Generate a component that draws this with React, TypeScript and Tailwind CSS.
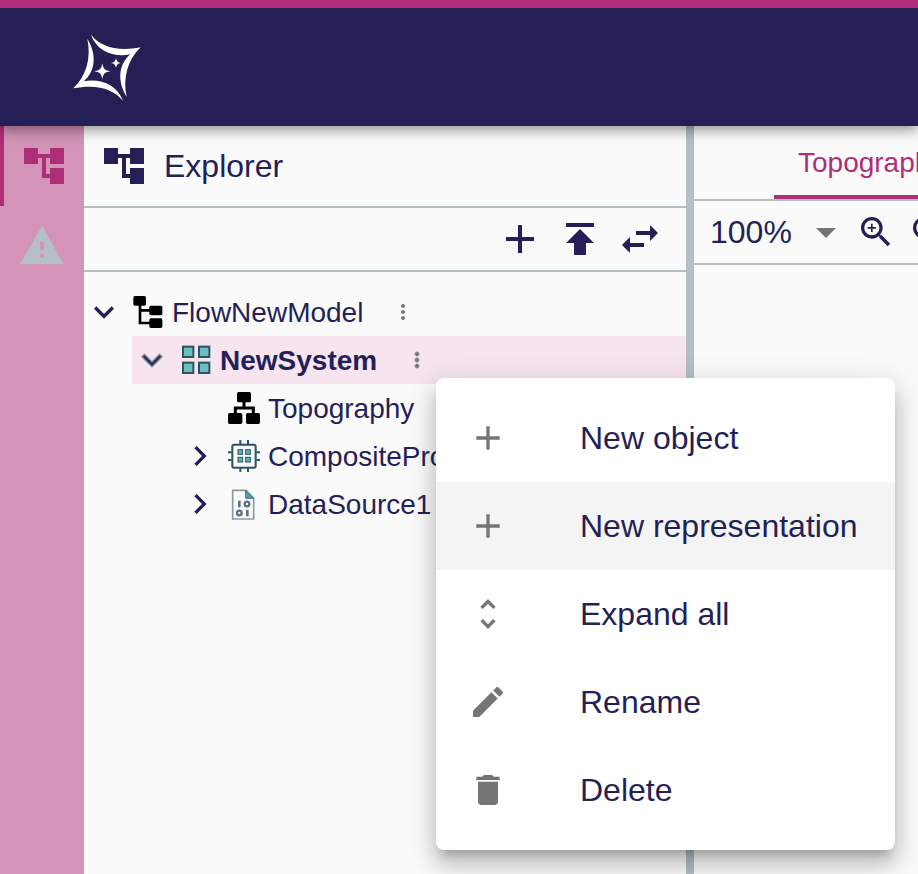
import React from 'react';

const paths = {
  tree: 'M22 11V3h-7v3H9V3H2v8h7V8h2v10h4v3h7v-8h-7v3h-2V8h2v3z',
  warning: 'M1 21h22L12 2 1 21zm12-3h-2v-2h2v2zm0-4h-2v-4h2v4z',
  add: 'M19 13h-6v6h-2v-6H5v-2h6V5h2v6h6v2z',
  publish: 'M5 4v2h14V4H5zm0 10h4v6h6v-6h4l-7-7-7 7z',
  swap: 'M6.99 11L3 15l3.99 4v-3H14v-2H6.99v-3zM21 9l-3.99-4v3H10v2h7.01v3L21 9z',
  down: 'M16.59 8.59L12 13.17 7.41 8.59 6 10l6 6 6-6z',
  right: 'M10 6L8.59 7.41 13.17 12l-4.58 4.59L10 18l6-6z',
  more: 'M12 8c1.1 0 2-.9 2-2s-.9-2-2-2-2 .9-2 2 .9 2 2 2zm0 2c-1.1 0-2 .9-2 2s.9 2 2 2 2-.9 2-2-.9-2-2-2zm0 6c-1.1 0-2 .9-2 2s.9 2 2 2 2-.9 2-2-.9-2-2-2z',
  dropDown: 'M7 10l5 5 5-5z',
  zoomIn:
    'M15.5 14h-.79l-.28-.27C15.41 12.59 16 11.11 16 9.5 16 5.91 13.09 3 9.5 3S3 5.91 3 9.5 5.91 16 9.5 16c1.61 0 3.09-.59 4.23-1.57l.27.28v.79l5 4.99L20.49 19l-4.99-5zm-6 0C7.01 14 5 11.99 5 9.5S7.01 5 9.5 5 14 7.01 14 9.5 11.99 14 9.5 14zM12 10h-2v2H9v-2H7V9h2V7h1v2h2v1z',
  zoomOut:
    'M15.5 14h-.79l-.28-.27C15.41 12.59 16 11.11 16 9.5 16 5.91 13.09 3 9.5 3S3 5.91 3 9.5 5.91 16 9.5 16c1.61 0 3.09-.59 4.23-1.57l.27.28v.79l5 4.99L20.49 19l-4.99-5zm-6 0C7.01 14 5 11.99 5 9.5S7.01 5 9.5 5 14 7.01 14 9.5 11.99 14 9.5 14zM7 9h5v1H7z',
  unfold:
    'M12 5.83L15.17 9l1.41-1.41L12 3 7.41 7.59 8.83 9 12 5.83zm0 12.34L8.83 15l-1.41 1.41L12 21l4.59-4.59L15.17 15 12 18.17z',
  edit: 'M3 17.25V21h3.75L17.81 9.94l-3.75-3.75L3 17.25zM20.71 7.04c.39-.39.39-1.02 0-1.41l-2.34-2.34c-.39-.39-1.02-.39-1.41 0l-1.83 1.83 3.75 3.75 1.83-1.83z',
  trash: 'M6 19c0 1.1.9 2 2 2h8c1.1 0 2-.9 2-2V7H6v12zM19 4h-3.5l-1-1h-5l-1 1H5v2h14V4z',
};

function Icon({ name, className, halo }: { name: keyof typeof paths; className: string; halo?: boolean }) {
  return (
    <svg viewBox="0 0 24 24" className={className} fill="currentColor" aria-hidden="true">
      <path d={paths[name]} />
      {halo && <path d={paths[name]} fill="none" stroke="#7b8e96" strokeWidth="0.9" />}
    </svg>
  );
}

function Logo() {
  const blade =
    'M93 41 C122 78 172 92 242 79 C202 118 188 170 200 228 C172 182 174 132 211 100 C165 110 110 92 93 41Z';
  return (
    <svg viewBox="39 36 204 204" className="size-[68px]" fill="white" aria-label="Home">
      <path d={blade} />
      <path d={blade} transform="rotate(180 141 140.5)" />
      <path d="M127 127 C130 144 134 148 151 151 C134 154 130 158 127 175 C124 158 120 154 103 151 C120 148 124 144 127 127Z" />
      <path d="M168 111 C170 121 173 124 183 126 C173 128 170 131 168 141 C166 131 163 128 153 126 C163 124 166 121 168 111Z" />
    </svg>
  );
}

function ModelIcon() {
  return (
    <svg viewBox="0 0 96 96" className="size-8 shrink-0" aria-hidden="true">
      <rect x="4" y="0" width="38" height="29" rx="5" />
      <rect x="52" y="29" width="39" height="29" rx="5" />
      <rect x="52" y="67" width="39" height="29" rx="5" />
      <path d="M24 26V81H54M24 43H54" fill="none" stroke="black" strokeWidth="8" />
    </svg>
  );
}

function SystemIcon() {
  return (
    <svg viewBox="0 0 96 96" className="size-8 shrink-0" fill="#6bbfc1" stroke="#2c5361" strokeWidth="6" aria-hidden="true">
      <rect x="9" y="8" width="31" height="31" />
      <rect x="57" y="8" width="31" height="31" />
      <rect x="9" y="56" width="31" height="31" />
      <rect x="57" y="56" width="31" height="31" />
    </svg>
  );
}

function TopographyIcon() {
  return (
    <svg viewBox="0 0 96 96" className="size-8 shrink-0" aria-hidden="true">
      <rect x="27" y="0" width="42" height="31" rx="5" />
      <rect x="0" y="63" width="43" height="33" rx="5" />
      <rect x="54" y="63" width="42" height="33" rx="5" />
      <path d="M48 28V48M22 66V48H76V66" fill="none" stroke="black" strokeWidth="9" />
    </svg>
  );
}

function ProcessorIcon() {
  return (
    <svg viewBox="0 0 96 96" className="size-8 shrink-0" fill="none" stroke="#2c5361" strokeWidth="6" aria-hidden="true">
      <rect x="13" y="14" width="70" height="69" rx="5" fill="#fafafa" />
      <path d="M37 0V12M60 0V12M37 85V96M60 85V96M0 37H11M0 60H11M85 37H96M85 60H96" />
      <g fill="#5fb0b6" strokeWidth="3">
        <rect x="30" y="29" width="14" height="14" />
        <rect x="53" y="29" width="14" height="14" />
        <rect x="30" y="52" width="14" height="14" />
        <rect x="53" y="52" width="14" height="14" />
      </g>
    </svg>
  );
}

function SourceIcon() {
  return (
    <svg viewBox="0 0 96 96" className="size-8 shrink-0" fill="none" aria-hidden="true">
      <path d="M14 7H54L77 31V93H14Z" stroke="#8a9aa1" strokeWidth="5" fill="#fafafa" />
      <path d="M53 7L77 31H53Z" fill="#4a9fb0" stroke="#4d7480" strokeWidth="3" />
      <path d="M34 38V58M58 65V85" stroke="#5f727c" strokeWidth="8" />
      <circle cx="57" cy="48" r="7" stroke="#5f727c" strokeWidth="7" />
      <circle cx="34" cy="75" r="7" stroke="#5f727c" strokeWidth="7" />
    </svg>
  );
}

type RowProps = {
  label: string;
  icon: React.ReactNode;
  arrow?: 'down' | 'right';
  more?: boolean;
  selected?: boolean;
};

function Row({ label, icon, arrow, more, selected }: RowProps) {
  return (
    <div className={selected ? 'flex h-12 items-center bg-[#f6e5ef] font-bold' : 'flex h-12 items-center'}>
      <div className="mr-2 size-10 shrink-0">
        {arrow && (
          <button type="button" aria-label={'Toggle ' + label} className="block">
            <Icon name={arrow} className="size-10" halo={selected} />
          </button>
        )}
      </div>
      {icon}
      <span className="ml-2 whitespace-nowrap pt-0.5 text-[28px] leading-10">{label}</span>
      {more && (
        <button type="button" aria-label={'More actions for ' + label} className="ml-7 text-[#757575]">
          <Icon name="more" className="size-6" halo={selected} />
        </button>
      )}
    </div>
  );
}

const menuItems: { label: string; icon: keyof typeof paths; active?: boolean }[] = [
  { label: 'New object', icon: 'add' },
  { label: 'New representation', icon: 'add', active: true },
  { label: 'Expand all', icon: 'unfold' },
  { label: 'Rename', icon: 'edit' },
  { label: 'Delete', icon: 'trash' },
];

function ContextMenu() {
  return (
    <div
      role="menu"
      className="absolute left-[436px] top-[378px] z-20 w-[459px] rounded-lg bg-white py-4 shadow-[0_10px_10px_-6px_rgba(0,0,0,0.2),0_16px_20px_2px_rgba(0,0,0,0.14),0_6px_28px_4px_rgba(0,0,0,0.12)]"
    >
      {menuItems.map((item) => (
        <button
          key={item.label}
          type="button"
          role="menuitem"
          className={
            item.active
              ? 'flex h-[88px] w-full items-center gap-[72px] bg-[#f4f4f4] px-8 text-left'
              : 'flex h-[88px] w-full items-center gap-[72px] px-8 text-left'
          }
        >
          <Icon name={item.icon} className="size-10 shrink-0 text-[#757575]" />
          <span className="whitespace-nowrap text-[32px] leading-[48px]">{item.label}</span>
        </button>
      ))}
    </div>
  );
}

export default function App() {
  return (
    <div className="relative flex h-screen flex-col overflow-hidden bg-[#fafafa] font-['Helvetica_Neue','Liberation_Sans',Arial,sans-serif] text-[#251f58]">
      <header className="relative z-10 flex h-[126px] shrink-0 items-center border-t-8 border-[#ae2f78] bg-[#241f54] px-[73px] shadow-[0_4px_8px_-2px_rgba(0,0,0,0.2),0_8px_10px_0_rgba(0,0,0,0.14),0_2px_20px_0_rgba(0,0,0,0.12)]">
        <a href="#home">
          <Logo />
        </a>
      </header>

      <div className="flex min-h-0 flex-1">
        <nav className="w-[84px] shrink-0 bg-[#d494b7]" aria-label="Views">
          <button
            type="button"
            aria-label="Explorer"
            className="flex h-20 w-full items-center justify-center border-l-4 border-[#ae2f78] text-[#ae2f78]"
          >
            <Icon name="tree" className="size-12" />
          </button>
          <button type="button" aria-label="Validation" className="flex h-20 w-full items-center justify-center text-[#b5bfc5]">
            <Icon name="warning" className="size-12" />
          </button>
        </nav>

        <section className="w-[602px] shrink-0 overflow-hidden">
          <div className="flex h-[82px] items-center gap-4 border-b-2 border-[#b3bfc1] px-4">
            <Icon name="tree" className="size-12" />
            <h2 className="text-[32px] leading-10">Explorer</h2>
          </div>
          <div className="flex h-16 items-center justify-end gap-3 border-b-2 border-[#b3bfc1] px-[22px]">
            <button type="button" aria-label="New model">
              <Icon name="add" className="size-12" />
            </button>
            <button type="button" aria-label="Upload model">
              <Icon name="publish" className="size-12" />
            </button>
            <button type="button" aria-label="Synchronize selection">
              <Icon name="swap" className="size-12" />
            </button>
          </div>
          <ul className="pt-4">
            <li>
              <Row label="FlowNewModel" icon={<ModelIcon />} arrow="down" more />
              <ul className="pl-12">
                <li>
                  <Row label="NewSystem" icon={<SystemIcon />} arrow="down" more selected />
                  <ul className="pl-12">
                    <li>
                      <Row label="Topography" icon={<TopographyIcon />} />
                    </li>
                    <li>
                      <Row label="CompositeProcessor1" icon={<ProcessorIcon />} arrow="right" />
                    </li>
                    <li>
                      <Row label="DataSource1" icon={<SourceIcon />} arrow="right" />
                    </li>
                  </ul>
                </li>
              </ul>
            </li>
          </ul>
        </section>

        <div className="w-2 shrink-0 bg-[#b5bfc3]" />

        <main className="min-w-0 flex-1 overflow-hidden">
          <div className="flex h-[75px] border-b-2 border-[#b3bfc1] pl-20">
            <button
              type="button"
              className="shrink-0 border-b-4 border-[#ae2f78] px-6 pt-1 text-[28px] leading-10 text-[#ae2f78]"
            >
              Topography
            </button>
          </div>
          <div className="flex h-16 items-center border-b-2 border-[#b3bfc1] pl-4">
            <div className="relative w-[140px] shrink-0">
              <select aria-label="Zoom level" defaultValue="100%" className="block w-full appearance-none bg-transparent text-[32px] leading-10">
                <option>100%</option>
              </select>
              <Icon name="dropDown" className="pointer-events-none absolute right-0 -top-1 size-12 text-[#757575]" />
            </div>
            <button type="button" aria-label="Zoom in" className="shrink-0 p-1.5">
              <Icon name="zoomIn" className="size-10" />
            </button>
            <button type="button" aria-label="Zoom out" className="shrink-0 p-1.5">
              <Icon name="zoomOut" className="size-10" />
            </button>
          </div>
        </main>
      </div>

      <ContextMenu />
    </div>
  );
}
